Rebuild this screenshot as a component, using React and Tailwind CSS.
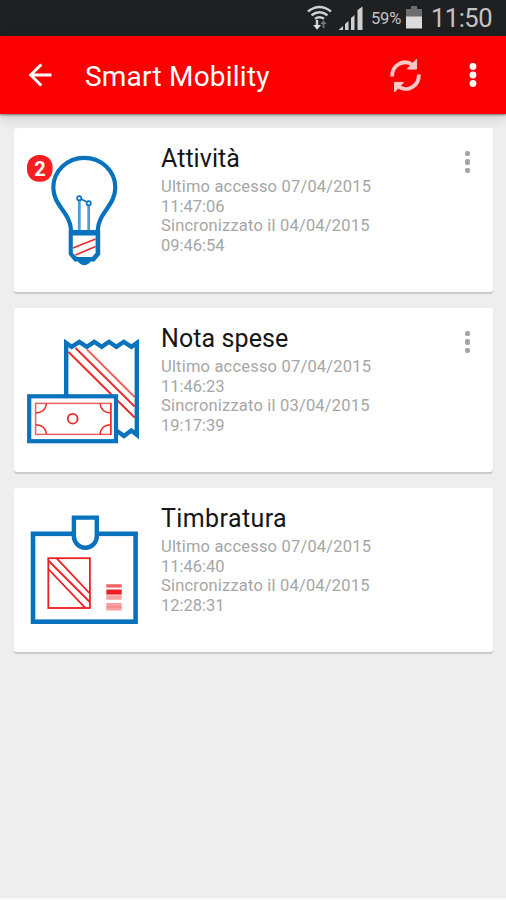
const BLUE = '#0872bd';
const RED = '#ea2a2a';

function BulbIcon() {
  return (
    <svg className="block h-[164px] w-[136px]" viewBox="14 128 136 164" fill="none">
      <path
        d="M71.2 231 C70.5 212 53.3 206 53.3 187.5 A31 29.6 0 0 1 115.3 187.5 C115.3 206 98.3 212 97.6 231"
        stroke={BLUE}
        strokeWidth="4.2"
      />
      <path fillRule="evenodd" d="M68.7 230H100.2V254.5L94.5 261.5H74.5L68.7 254.5ZM72.8 235.6V253L77 257H92L95.6 253V235.6Z" fill={BLUE} />
      <path d="M78.5 261 Q84.3 268 90 261Z" fill={BLUE} stroke={BLUE} strokeWidth="1.5" />
      <g stroke={BLUE}>
        <path d="M79.3 200V230M88.7 205V230" strokeWidth="2.8" strokeOpacity="0.7" />
        <path d="M81 199L87 202" strokeWidth="1.6" />
        <circle cx="79.2" cy="198.3" r="2.1" fill="#fff" strokeWidth="1.7" />
        <circle cx="88.7" cy="203.2" r="2.1" fill="#fff" strokeWidth="1.7" />
      </g>
      <path d="M73 248L95.6 239M75.5 255L95.6 246.5" stroke={RED} strokeWidth="1.6" />
      <rect x="27" y="155" width="25.6" height="26.8" rx="12" fill="#f51f22" />
      <text x="39.9" y="176" textAnchor="middle" fill="#fff" fontSize="20" fontWeight="700" fontFamily="Roboto, sans-serif">2</text>
    </svg>
  );
}

function ReceiptIcon() {
  return (
    <svg className="block h-[164px] w-[136px]" viewBox="14 308 136 164" fill="none">
      <path
        d="M66.2 396V343L71.7 346.8L79.3 341.8L86.8 346.8L94.3 341.8L101.7 346.8L109 341.8L116.4 346.8L123.8 341.8L131.4 346.8L136.8 343V434.8L131.3 430.6L124 436L117 431"
        stroke={BLUE}
        strokeWidth="4.4"
      />
      <path d="M68.5 352L134.6 417.5M75.5 348L134.6 406.5" stroke={RED} strokeWidth="1.9" />
      <path d="M87 349.5L134.6 397" stroke={RED} strokeWidth="1.9" strokeOpacity="0.75" />
      <rect x="29.2" y="396.3" width="86.8" height="44.9" fill="#fff" stroke={BLUE} strokeWidth="4.2" />
      <g stroke={RED} strokeWidth="1.5">
        <rect x="35.6" y="403.4" width="75.2" height="31" strokeOpacity="0.75" />
        <path d="M46.5 403.5Q45.5 412.5 36 413M100 403.5Q101 412.5 110.5 413M46.5 434.3Q45.5 425 36 424.7M100 434.3Q101 425 110.5 424.7" />
        <path d="M110.8 403V435" />
        <circle cx="72.7" cy="418.7" r="4.9" strokeWidth="1.8" />
      </g>
    </svg>
  );
}

function BadgeIcon() {
  return (
    <svg className="block h-[164px] w-[136px]" viewBox="14 488 136 164" fill="none">
      <rect x="33" y="533.8" width="102.6" height="87.9" stroke={BLUE} strokeWidth="4.6" />
      <path d="M73.9 517.6H96.8V536.3A11.45 11.45 0 0 1 73.9 536.3Z" fill="#fff" stroke={BLUE} strokeWidth="4.4" />
      <g stroke="#ee1f22" strokeWidth="1.8">
        <rect x="48.3" y="558.2" width="41.6" height="49.8" />
        <path d="M48.3 569L85 607.6M48.3 560.5L89.8 602M56.5 558.2L89.8 593.5" />
      </g>
      <g fill="#ee1f22">
        <path d="M106.3 584.2H121.7V587.6H106.3Z" opacity="0.7" />
        <path d="M106.3 589.5H121.7V594.6H106.3Z" />
        <path d="M106.3 595.2H121.7V599.8H106.3ZM106.3 603H121.7V610.4H106.3Z" opacity="0.42" />
        <path d="M106.3 606.2H121.7V607.6H106.3Z" opacity="0.2" />
      </g>
    </svg>
  );
}

function CardMenu() {
  return (
    <button className="mt-[22px] mr-[22px] flex h-6 w-[6px] flex-col justify-between py-[1px]" aria-label="Menu">
      <span className="size-[5.4px] rounded-[2px] bg-[#a4a4a4]" />
      <span className="size-[5.4px] rounded-[2px] bg-[#a4a4a4]" />
      <span className="size-[5.4px] rounded-[2px] bg-[#a4a4a4]" />
    </button>
  );
}

const cards = [
  { title: 'Attività', track: 'tracking-[0.05px]', Icon: BulbIcon, menu: true, lines: ['Ultimo accesso 07/04/2015', '11:47:06', 'Sincronizzato il 04/04/2015', '09:46:54'] },
  { title: 'Nota spese', track: 'tracking-[0.1px]', Icon: ReceiptIcon, menu: true, lines: ['Ultimo accesso 07/04/2015', '11:46:23', 'Sincronizzato il 03/04/2015', '19:17:39'] },
  { title: 'Timbratura', track: 'tracking-[0.4px]', Icon: BadgeIcon, menu: false, lines: ['Ultimo accesso 07/04/2015', '11:46:40', 'Sincronizzato il 04/04/2015', '12:28:31'] },
];

function Card({ title, track, Icon, menu, lines }) {
  return (
    <article className="flex h-[164px] rounded-[3px] bg-white shadow-[0_2px_1px_#c9c9c9]">
      <Icon />
      <div className="ml-[11px] flex-1 pt-4">
        <h2 className={`text-[25px] leading-[30px] text-[#151515] ${track}`}>{title}</h2>
        <div className="mt-[3px] text-[16.5px] leading-[19.7px] text-[#a6a6a6]">
          {lines.map((line, i) => (
            <p key={line} className={i % 2 === 0 ? 'tracking-[0.19px]' : 'tracking-[0px]'}>{line}</p>
          ))}
        </div>
      </div>
      {menu && <CardMenu />}
    </article>
  );
}

function StatusBar() {
  return (
    <div className="flex h-9 items-center bg-[#1e2022] text-[#c4c4c4]">
      <svg className="ml-[306px] h-9 w-[60px] shrink-0" viewBox="306 0 60 36" fill="none">
        <g stroke="#d0d0d0" strokeWidth="2.4">
          <path d="M308 11.5Q319.5 2.5 331 11.5M311.5 15.3Q319.5 9 327.5 15.3M315 18.8Q319.5 15.5 324 18.8" />
          <path d="M317 20V26" />
          <path d="M323.5 22V28" stroke="#777" strokeWidth="1.8" />
        </g>
        <path d="M313.2 25H321L317 29.8Z" fill="#e0e0e0" />
        <path d="M320.5 24L323.5 20.2L326.5 24Z" fill="#777" />
        <path d="M338.5 30L343 26V30ZM345 24L348.5 21V30H345ZM351 18L354.5 15V30H351ZM357.5 10L362.5 6.5V30H357.5Z" fill="#d0d0d0" />
      </svg>
      <span className="ml-[5px] w-[34px] pt-[2px] text-[16.5px] leading-[34px] tracking-[-0.2px] whitespace-nowrap">59%</span>
      <svg className="h-9 w-5 shrink-0" viewBox="405 0 20 36">
        <path d="M411 6H417V9H422V17H406V9H411Z" fill="#6d6d6d" />
        <path d="M406 16.5H422V28.5H406Z" fill="#dcdcdc" />
      </svg>
      <span className="ml-[6px] text-[25.5px] leading-9 tracking-[-0.5px] whitespace-nowrap">11:50</span>
    </div>
  );
}

function AppBar() {
  return (
    <header className="relative flex h-[78px] items-center bg-[#fb0000] text-white shadow-[0_1px_2px_#777,0_3px_12px_rgba(0,0,0,0.18)]">
      <svg className="h-[78px] w-[85px] shrink-0" viewBox="0 36 85 78" fill="none" stroke="#fff" strokeWidth="2.9">
        <path d="M30 75H51.5M41.3 64.5L30.7 75L41.3 85.5" />
      </svg>
      <h1 className="flex-1 pt-[3px] text-[28px] leading-9 tracking-[0.22px] whitespace-nowrap">Smart Mobility</h1>
      <svg className="h-[78px] w-[136px] shrink-0" viewBox="370 36 136 78" fill="none">
        <g stroke="#ffc6c6" strokeWidth="3.8">
          <path d="M392.2 76.5C391.6 65.5 403.5 58.5 412.5 64.8" />
          <path d="M418.8 74.5C419.4 85.8 407.5 92.8 398.5 86.6" />
        </g>
        <path d="M416.6 59V69H407.5Z" fill="#ffc6c6" stroke="#ffc6c6" strokeWidth="1" />
        <path d="M394.5 92V82.4H403.7Z" fill="#ffc6c6" stroke="#ffc6c6" strokeWidth="1" />
        <g fill="#fff">
          <circle cx="473" cy="66.5" r="3.4" />
          <circle cx="473" cy="75" r="3.4" />
          <circle cx="473" cy="83.5" r="3.4" />
        </g>
      </svg>
    </header>
  );
}

export default function App() {
  return (
    <div className="flex h-[900px] w-[506px] flex-col overflow-hidden bg-[#eeeeee] font-[Roboto,sans-serif]">
      <StatusBar />
      <AppBar />
      <main className="flex flex-1 flex-col gap-4 pt-[14px] pr-[13px] pl-[14px]">
        {cards.map((card) => (
          <Card key={card.title} {...card} />
        ))}
      </main>
      <div className="h-[2px] bg-[#f8f8f8]" />
    </div>
  );
}
